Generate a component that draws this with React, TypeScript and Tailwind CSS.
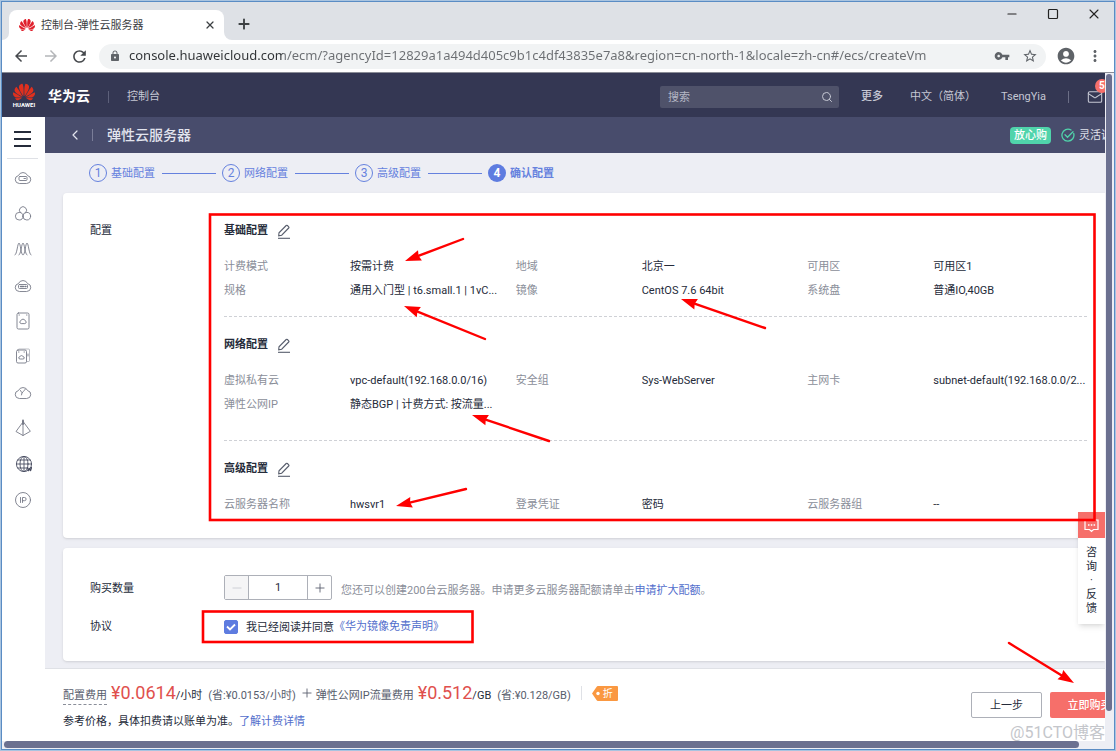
import { useState } from "react";
import type { ReactNode } from "react";
import {
  MdAccountCircle,
  MdArrowBack,
  MdArrowForward,
  MdLock,
  MdMoreVert,
  MdRefresh,
  MdStarBorder,
  MdVpnKey,
} from "react-icons/md";
import { SiHuawei } from "react-icons/si";
import { ChevronLeft, Mail, Minus, Plus, Search, Square, X } from "lucide-react";

const URL_TEXT =
  "console.huaweicloud.com/ecm/?agencyId=12829a1a494d405c9b1c4df43835e7a8&region=cn-north-1&locale=zh-cn#/ecs/createVm";

interface ConfigSection {
  title: string;
  items: [string, string][];
}

const sections: ConfigSection[] = [
  {
    title: "基础配置",
    items: [
      ["计费模式", "按需计费"],
      ["地域", "北京一"],
      ["可用区", "可用区1"],
      ["规格", "通用入门型 | t6.small.1 | 1vC..."],
      ["镜像", "CentOS 7.6 64bit"],
      ["系统盘", "普通IO,40GB"],
    ],
  },
  {
    title: "网络配置",
    items: [
      ["虚拟私有云", "vpc-default(192.168.0.0/16)"],
      ["安全组", "Sys-WebServer"],
      ["主网卡", "subnet-default(192.168.0.0/2..."],
      ["弹性公网IP", "静态BGP | 计费方式: 按流量..."],
    ],
  },
  {
    title: "高级配置",
    items: [
      ["云服务器名称", "hwsvr1"],
      ["登录凭证", "密码"],
      ["云服务器组", "--"],
    ],
  },
];

const steps = ["基础配置", "网络配置", "高级配置", "确认配置"];

const cloudPath = "M5 15.5a4 4 0 0 1-.6-7.9 5 5 0 0 1 9.2 0A4 4 0 0 1 13 15.5z";

// Sidebar service icons, drawn on an 18x18 grid
const services: { name: string; icon: ReactNode }[] = [
  {
    name: "弹性云服务器",
    icon: (
      <>
        <path d={cloudPath} />
        <rect x="5" y="8.5" width="8" height="4" rx="1" />
        <path d="M10 10.5h1.5" />
      </>
    ),
  },
  {
    name: "弹性伸缩",
    icon: (
      <>
        <path d="M6.200 8.600a3.600 3.600 0 1 1 5.600 0" />
        <circle cx="5.200" cy="12.200" r="3.800" />
        <circle cx="12.800" cy="12.200" r="3.800" />
      </>
    ),
  },
  {
    name: "负载均衡",
    icon: (
      <>
        <path d="M1 15C3 15 3.500 3 5 3s2 12 4 12 2.500-12 4-12 2 12 4 12" />
        <path d="M5 15c2 0 2.500-12 4-12s2 12 4 12" />
      </>
    ),
  },
  {
    name: "裸金属服务器",
    icon: (
      <>
        <path d={cloudPath} />
        <rect x="4.500" y="8.500" width="9" height="4" rx="1" />
        <path d="M6.500 10.500h3M11 10.500h1" strokeWidth="1.400" />
      </>
    ),
  },
  {
    name: "云硬盘",
    icon: (
      <>
        <rect x="3" y="1" width="12" height="16" rx="1.500" />
        <path d="M6.800 11.500a1.400 1.400 0 0 1 0-2.700 2.300 2.300 0 0 1 4.400 0 1.400 1.400 0 0 1 0 2.700z" />
        <path d="M5 3h.5M12.500 3h.5" />
      </>
    ),
  },
  {
    name: "专属存储",
    icon: (
      <>
        <rect x="2.500" y="3" width="10" height="13" rx="1.500" />
        <path d="M5 2h9.500q1 0 1 1v10.500q0 1-1 1h-2" opacity=".55" />
        <path d="M5.800 12a1.100 1.100 0 0 1 0-2.200 1.800 1.800 0 0 1 3.400 0 1.100 1.100 0 0 1 0 2.200z" />
        <path d="M4.500 5H5M10 5h.5M14 7v2" />
      </>
    ),
  },
  {
    name: "云备份",
    icon: (
      <>
        <path d={cloudPath} />
        <path d="M6.500 7.500 8 10l3.500-4M8 10l-.5 2" strokeDasharray="2 1" />
      </>
    ),
  },
  {
    name: "虚拟私有云",
    icon: (
      <>
        <path d="M9 3 2 12.500l7 4 7-4zM9 3v13.500" />
        <path d="M9 1.500V5" strokeWidth="2" />
      </>
    ),
  },
  {
    name: "域名注册",
    icon: (
      <g className="stroke-[#4b4f63]">
        <circle cx="10" cy="9" r="7.600" />
        <path d="M10 1.400v15.200M2.400 9h15.200M3.800 5h12.400M3.800 13h9" />
        <ellipse cx="10" cy="9" rx="4" ry="7.600" />
        <path d="m13.500 12.500 1 3 1-2 1 2 1-3" strokeWidth="1.400" />
      </g>
    ),
  },
  {
    name: "弹性公网IP",
    icon: (
      <>
        <circle cx="9" cy="9" r="7.500" />
        <path d="M6.500 6.500v5M8.500 11.500V6.500h2a1.600 1.600 0 0 1 0 3.200h-2" />
      </>
    ),
  },
];

interface ArrowProps {
  from: [number, number];
  to: [number, number];
}

// The arrow is drawn along the x axis with its tip at the origin, then rotated
const Arrow = ({ from, to }: ArrowProps) => {
  const dx = from[0] - to[0];
  const dy = from[1] - to[1];
  const length = Math.hypot(dx, dy);
  const angle = (Math.atan2(dy, dx) * 180) / Math.PI;

  return (
    <g transform={`translate(${to[0]} ${to[1]}) rotate(${angle})`}>
      <line x1="12" x2={length} stroke="red" strokeWidth="2.4" strokeLinecap="round" />
      <polygon points="0,0 16,-5.500 14.500,0 16,5.500" fill="red" />
    </g>
  );
};

const Annotations = () => (
  <svg className="pointer-events-none absolute -top-px -left-px size-full overflow-visible" aria-hidden="true">
    <g fill="none" stroke="red" strokeWidth="2.6">
      <rect x="210" y="214.500" width="884.500" height="305.500" />
      <rect x="203" y="611.500" width="269.500" height="30.500" />
    </g>
    <Arrow from={[463, 239]} to={[405, 261]} />
    <Arrow from={[485, 339]} to={[404, 306]} />
    <Arrow from={[765, 328]} to={[681, 299]} />
    <Arrow from={[549, 441]} to={[472, 415]} />
    <Arrow from={[466, 489]} to={[396, 506]} />
    <Arrow from={[1009, 643]} to={[1074, 683]} />
  </svg>
);

const BrowserChrome = () => (
  <div className="font-['Noto_Sans','Noto_Sans_CJK_SC',sans-serif]">
    {/* Tab strip */}
    <div className="flex h-[38px] bg-[#dee1e6]">
      <span className="h-2 w-[7px] self-end bg-white">
        <span className="block h-2 rounded-br-lg bg-[#dee1e6]" />
      </span>
      <div className="mt-2 flex w-[215px] items-center rounded-t-lg bg-white pr-1 pl-[10px]">
        <SiHuawei className="size-4 text-[#e0202c]" />
        <span className="ml-1.5 flex-1 text-[11px] text-[#3c4043]">控制台-弹性云服务器</span>
        <button aria-label="关闭标签页" className="p-1">
          <X className="size-3 text-[#3c4043]" strokeWidth={2.500} />
        </button>
      </div>
      <span className="size-2 self-end bg-white">
        <span className="block size-2 rounded-bl-lg bg-[#dee1e6]" />
      </span>
      <button aria-label="新建标签页" className="ml-1 self-center pt-1.5">
        <Plus className="size-4 text-[#3c4043]" strokeWidth={2.800} />
      </button>
      <div className="ml-auto flex h-6 items-center text-[#222]">
        <button aria-label="最小化" className="flex w-[41px] justify-center">
          <Minus className="size-3.5" strokeWidth={1.800} />
        </button>
        <button aria-label="最大化" className="flex w-[41px] justify-center">
          <Square className="size-3" strokeWidth={2.400} />
        </button>
        <button aria-label="关闭" className="flex w-[41px] justify-center">
          <X className="size-4" strokeWidth={1.600} />
        </button>
      </div>
    </div>
    {/* Address bar */}
    <div className="flex h-[33px] items-center border-b border-[#8a8c96] bg-white pl-2.5 text-[#5f6368]">
      <button aria-label="后退" className="mr-3">
        <MdArrowBack className="size-[18px] text-[#46494d]" />
      </button>
      <button aria-label="前进" className="mr-2.5">
        <MdArrowForward className="size-[18px] text-[#b4b6b9]" />
      </button>
      <button aria-label="重新加载">
        <MdRefresh className="size-[19px] text-[#46494d]" />
      </button>
      <div className="ml-2.5 flex h-[25px] flex-1 items-center rounded-full bg-[#f1f3f4] pr-2 pl-2.5">
        <MdLock className="size-3" />
        <input
          aria-label="地址栏"
          defaultValue={URL_TEXT}
          className="ml-2 min-w-0 flex-1 bg-[linear-gradient(90deg,#303336_154px,#6b6e72_154px)] bg-clip-text text-[13px] text-transparent outline-none"
        />
        <button aria-label="密码" className="mr-3">
          <MdVpnKey className="size-4" />
        </button>
        <button aria-label="收藏">
          <MdStarBorder className="size-4" />
        </button>
      </div>
      <button aria-label="用户" className="ml-2.5">
        <MdAccountCircle className="size-5" />
      </button>
      <button aria-label="更多选项" className="mx-2.5">
        <MdMoreVert className="size-[18px]" />
      </button>
    </div>
  </div>
);

const Header = () => (
  <header className="flex h-11 items-center overflow-hidden bg-[#343753] pt-1 pl-2 text-[11px] text-[#c5c7d3]">
    <a href="#home" className="flex w-7 flex-col items-center pb-1" aria-label="HUAWEI">
      <SiHuawei className="size-[22px] text-[#e0301e]" />
      <span className="-mt-0.5 text-[6px] leading-[8px] font-bold text-white">HUAWEI</span>
    </a>
    <a href="#cloud" className="ml-2.5 pb-0.5 text-[14px] font-bold text-white">
      华为云
    </a>
    <span className="ml-[18px] h-3 w-px bg-[#5d607a]" />
    <a href="#console" className="ml-[18px]">
      控制台
    </a>
    <label className="ml-auto flex h-[22px] w-[179px] items-center rounded-xs bg-[#4f526a] pr-1.5 pl-2">
      <input aria-label="搜索" placeholder="搜索" className="min-w-0 flex-1 pt-0.5 outline-none placeholder:text-[#b4b6c4]" />
      <Search className="size-3" />
    </label>
    <a href="#more" className="ml-[22px] font-medium">
      更多
    </a>
    <a href="#lang" className="ml-[27px] whitespace-nowrap">
      中文（简体）
    </a>
    <a href="#user" className="ml-[25px]">
      TsengYia
    </a>
    <span className="ml-[22px] h-3 w-px bg-[#6b6e86]" />
    <button aria-label="消息" className="relative -mr-[18px] ml-[18px] w-9">
      <Mail className="size-4" strokeWidth={1.600} />
      <span className="absolute -top-2.5 left-2 size-3.5 rounded-full bg-[#f66f6a] pl-1 text-left text-[10px] leading-[14px] font-bold text-white">
        5
      </span>
    </button>
  </header>
);

const Sidebar = () => (
  <aside className="flex w-[43px] shrink-0 flex-col items-center bg-white pr-0.5">
    <button aria-label="服务列表" className="flex h-[41px] flex-col justify-center gap-[5px] pt-0.5">
      <span className="h-0.5 w-[17px] bg-[#252b3a]" />
      <span className="h-0.5 w-[17px] bg-[#252b3a]" />
      <span className="h-0.5 w-[17px] bg-[#252b3a]" />
    </button>
    <hr className="w-[31px] border-[#dfe1e6]" />
    <nav className="mt-[9px] flex h-[341px] flex-col justify-between">
      {services.map((service) => (
        <a key={service.name} href="#service" aria-label={service.name}>
          <svg
            viewBox="0 0 18 18"
            className="size-[18px]"
            fill="none"
            stroke="#777b88"
            strokeWidth="0.9"
            strokeLinecap="round"
            strokeLinejoin="round"
          >
            {service.icon}
          </svg>
        </a>
      ))}
    </nav>
  </aside>
);

const Steps = () => (
  <ol className="flex h-10 items-center pl-11 text-[11px] text-[#6581de]">
    {steps.map((step, index) => {
      const active = index === steps.length - 1;
      return (
        <li key={step} className={active ? "flex items-center font-bold" : "flex items-center"}>
          <span
            className={
              active
                ? "flex size-[18px] items-center justify-center rounded-full bg-[#5e7ce0] text-[12px] text-white"
                : "flex size-[18px] items-center justify-center rounded-full border border-[#6581de] text-[12px]"
            }
          >
            {index + 1}
          </span>
          <span className="ml-1 pt-0.5">{step}</span>
          {!active && <span className="mr-1.5 ml-[7px] h-px w-[54px] bg-[#6581de]" />}
        </li>
      );
    })}
  </ol>
);

const ConfigCard = () => (
  <section className="flex rounded-l-sm bg-white pt-[26px] pb-[21px] pl-[27px] shadow-sm">
    <h2 className="w-[134px] shrink-0 leading-6">配置</h2>
    <div className="mr-[18px] flex-1">
      {sections.map((section, index) => (
        <div
          key={section.title}
          className={
            index === 0
              ? "border-b border-dashed border-[#cfd1d6] pb-[13px]"
              : index === 1
                ? "border-b border-dashed border-[#cfd1d6] pt-4 pb-[23px]"
                : "pt-4"
          }
        >
          <h3 className="flex h-6 items-center gap-2 font-bold">
            {section.title}
            <button aria-label={`修改${section.title}`}>
              <svg viewBox="0 0 15 15" className="size-[15px]" fill="none" stroke="#575d6c" strokeWidth="1.100">
                <path d="M2 14.300h12" />
                <path d="M2.700 11.800 3 8.800l7.200-7.300q.6-.6 1.200 0l1.300 1.300q.6.6 0 1.200L5.700 11.200z" />
              </svg>
            </button>
          </h3>
          <dl className="mt-3 grid grid-cols-3 gap-x-3 leading-6">
            {section.items.map(([label, value]) => (
              <div key={label} className="flex whitespace-nowrap">
                <dt className="w-[126px] shrink-0 text-[#8a8e99]">{label}</dt>
                <dd className="min-w-0">{value}</dd>
              </div>
            ))}
          </dl>
        </div>
      ))}
    </div>
  </section>
);

const PurchaseCard = () => {
  const [count, setCount] = useState(1);
  const [agreed, setAgreed] = useState(true);

  return (
    <section className="mt-2.5 rounded-l-sm bg-white pt-[27px] pb-[22px] pl-[27px] shadow-sm">
      <div className="flex h-[25px] items-center">
        <label htmlFor="count" className="w-[134px] pt-1">
          购买数量
        </label>
        <div className="flex h-[25px] w-[108px] rounded-xs border border-[#adb0b8]">
          <button
            aria-label="减少"
            disabled={count === 1}
            onClick={() => setCount(count - 1)}
            className="flex w-6 items-center justify-center border-r border-[#adb0b8] bg-[#f5f5f6]"
          >
            <Minus className="size-3.5 text-[#c9cbd1]" strokeWidth={1.500} />
          </button>
          <input
            id="count"
            value={count}
            onChange={(e) => setCount(Number(e.target.value) || 1)}
            className="min-w-0 flex-1 pt-0.5 text-center outline-none"
          />
          <button
            aria-label="增加"
            onClick={() => setCount(count + 1)}
            className="flex w-6 items-center justify-center border-l border-[#adb0b8]"
          >
            <Plus className="size-3.5 text-[#575d6c]" strokeWidth={1.500} />
          </button>
        </div>
        <p className="ml-[9px] pt-2 text-[#8a8e99]">
          您还可以创建200台云服务器。申请更多云服务器配额请单击
          <a href="#quota" className="text-[#526ecc]">
            申请扩大配额
          </a>
          。
        </p>
      </div>
      <div className="mt-[15px] flex h-6 items-center">
        <span className="w-[134px]">协议</span>
        <label className="flex items-center">
          <span className="relative flex">
            <input
              type="checkbox"
              checked={agreed}
              onChange={(e) => setAgreed(e.target.checked)}
              className="peer size-3.5 appearance-none rounded-xs border border-[#adb0b8] checked:border-[#5e7ce0] checked:bg-[#5e7ce0]"
            />
            <svg
              viewBox="0 0 14 14"
              className="pointer-events-none absolute inset-0 hidden size-3.5 peer-checked:block"
              fill="none"
              stroke="white"
              strokeWidth="1.800"
            >
              <path d="m3 6.500 3 3 5-5" />
            </svg>
          </span>
          <span className="ml-2 pt-0.5">我已经阅读并同意</span>
        </label>
        <a href="#statement" className="text-[#526ecc]">
          《华为镜像免责声明》
        </a>
      </div>
    </section>
  );
};

const PriceBar = () => (
  <footer className="mt-[7px] flex overflow-hidden border-t border-[#dfe1e6] bg-white pt-2.5 pb-2 pl-[18px] text-[#575d6c]">
    <div className="flex-1 whitespace-nowrap">
      <div className="flex h-7 items-baseline leading-7">
        <span className="border-b border-dashed border-[#8a8e99] leading-4">配置费用</span>
        <strong className="ml-1 text-lg leading-7 font-normal text-[#e0504d]">¥0.0614</strong>
        <span className="text-[#252b3a]">/小时</span>
        <span className="ml-1.5">(省:¥0.0153/小时)</span>
        <Plus className="ml-1 size-3.5 self-center" strokeWidth={1.500} />
        <span className="ml-0.5">弹性公网IP流量费用</span>
        <strong className="ml-1 text-lg leading-7 font-normal text-[#e0504d]">¥0.512</strong>
        <span className="text-[#252b3a]">/GB</span>
        <span className="ml-1.5">(省:¥0.128/GB)</span>
        <span className="ml-2.5 h-3.5 w-px self-center bg-[#dfe1e6]" />
        <span className="relative ml-2.5 flex h-[15px] w-[26px] self-center pl-[11px] text-[10px] leading-[15px] text-white">
          <svg viewBox="0 0 26 15" className="absolute inset-0 h-[15px] w-[26px]">
            <path d="M0 7.500 4.500 1Q5 0 6 0h19q1 0 1 1v13q0 1-1 1H6q-1 0-1.500-1z" fill="#fa9841" />
            <circle cx="6" cy="7.500" r="1.700" fill="white" />
          </svg>
          <span className="relative">折</span>
        </span>
      </div>
      <p className="mt-1 leading-[22px]">
        <span className="text-[#252b3a]">参考价格，具体扣费请以账单为准。</span>
        <a href="#billing" className="text-[#526ecc]">
          了解计费详情
        </a>
      </p>
    </div>
    <div className="mt-[13px] -mr-6 flex items-start gap-2">
      <button className="h-[26px] w-[71px] rounded-xs border border-[#adb0b8] pt-0.5 text-[#252b3a]">上一步</button>
      <button className="h-[26px] w-[79px] rounded-xs bg-[#f66f6a] pt-0.5 font-medium text-white">立即购买</button>
    </div>
  </footer>
);

const FeedbackWidget = () => (
  <aside className="absolute top-[395px] right-0 w-[27px] bg-white text-center shadow-md">
    <button aria-label="咨询反馈" className="flex h-[26px] w-full items-center justify-center bg-[#f66f6a]">
      <svg viewBox="0 0 15 15" className="size-[15px]" fill="none" stroke="white" strokeWidth="1.200">
        <path d="M1 2h13v9.500H9.500l-2 2-2-2H1z" />
        <path d="M4 7h1.500M6.800 7h1.500M9.600 7h1.500" strokeWidth="1.600" />
      </svg>
    </button>
    <p className="flex flex-col items-center pt-2 pb-2 leading-[14px]">
      <span>咨</span>
      <span>询</span>
      <span>·</span>
      <span>反</span>
      <span>馈</span>
    </p>
  </aside>
);

export default function App() {
  return (
    <div className="relative flex min-h-screen flex-col overflow-hidden border border-[#a9c4e0] font-[Roboto,'Noto_Sans_CJK_SC',sans-serif]">
      <div className="flex flex-1 flex-col border border-[#5a8cc4]">
        <BrowserChrome />
        <div className="flex flex-1">
          <div className="flex min-w-0 flex-1 flex-col">
            <Header />
            <div className="flex flex-1">
              <Sidebar />
              <main className="relative min-w-0 flex-1 overflow-hidden bg-[#edeef4] text-[11px] text-[#252b3a]">
                <div className="flex h-9 items-center bg-[#484c6c] pl-[22px] text-[#e2e4ee]">
                  <button aria-label="返回">
                    <ChevronLeft className="size-4" strokeWidth={1.800} />
                  </button>
                  <span className="ml-[9px] h-3 w-px bg-[#7a7d98]" />
                  <h1 className="ml-3.5 text-[14px] font-medium">弹性云服务器</h1>
                  <span className="ml-auto h-[17px] rounded-sm bg-[#50d4ab] px-1 leading-[17px] font-medium text-white">
                    放心购
                  </span>
                  <svg
                    viewBox="0 0 14 14"
                    className="ml-2.5 size-3.5"
                    fill="none"
                    stroke="#50d4ab"
                    strokeWidth="1.300"
                    strokeLinecap="round"
                  >
                    <path d="M12.700 5.500A6 6 0 1 1 10 2" />
                    <path d="m4 6.800 2.500 2.500 5.500-5.500" />
                  </svg>
                  <span className="-mr-[18px] ml-1 pt-0.5 whitespace-nowrap">灵活调整</span>
                </div>
                <Steps />
                <div className="pl-[18px]">
                  <ConfigCard />
                  <PurchaseCard />
                </div>
                <PriceBar />
                <FeedbackWidget />
                <span className="absolute right-0 bottom-0 text-[16px] leading-4 text-[#c4c6cb]">@51CTO博客</span>
              </main>
            </div>
          </div>
          {/* Vertical scrollbar */}
          <div className="w-[9px] bg-[#edeef4] pt-px pr-0.5 pl-px">
            <div className="h-[637px] rounded-full bg-[#6b7090]" />
          </div>
        </div>
        {/* Horizontal scrollbar */}
        <div className="h-2 bg-[#edeef4] pr-[35px] pb-px pl-0.5">
          <div className="h-[7px] rounded-full bg-[#6b7090]" />
        </div>
      </div>
      <Annotations />
    </div>
  );
}
